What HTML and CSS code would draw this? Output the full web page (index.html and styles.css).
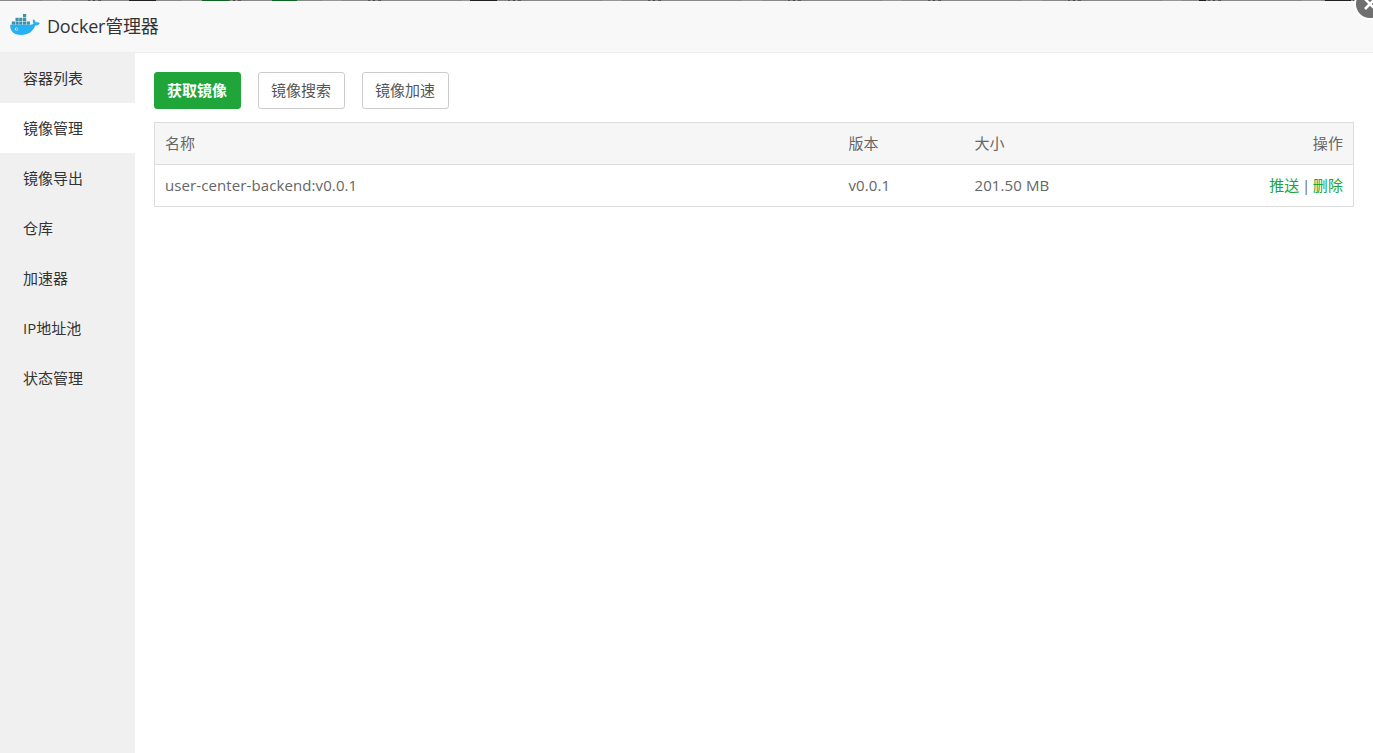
FILE: index.html
```html
<!DOCTYPE html>
<html lang="zh-CN">

<head>
    <meta charset="UTF-8">
    <meta name="viewport" content="width=device-width, initial-scale=1.0">
    <title>Docker管理器</title>
    <link rel="stylesheet" href="styles.css">
</head>

<body>
    <div class="backdrop"></div>
    <header class="title_bar">
        <svg class="logo" width="30" height="22" viewBox="0 0 30 22">
            <g fill="#3d92a8">
                <rect x="13" y="0" width="3.2" height="3.2"></rect>
                <rect x="5.5" y="3.8" width="3.2" height="3.2"></rect>
                <rect x="9.2" y="3.8" width="3.2" height="3.2"></rect>
                <rect x="13" y="3.8" width="3.2" height="3.2"></rect>
                <rect x="1.8" y="7.5" width="3.2" height="3.2"></rect>
                <rect x="5.5" y="7.5" width="3.2" height="3.2"></rect>
                <rect x="9.2" y="7.5" width="3.2" height="3.2"></rect>
                <rect x="13" y="7.5" width="3.2" height="3.2"></rect>
                <rect x="16.7" y="7.5" width="3.2" height="3.2"></rect>
            </g>
            <path fill="#27b1f5" d="M.2 10.7H20c1.5 0 2.700-.4 3.700-1.200-1.300-1.400-1.300-3.100-.2-4.300 1.300.8 2.100 1.900 2.200 3.200 1.500-.3 3-.1 4.200.6-.8 1.700-2.400 2.600-4.700 2.600C23.100 17.600 18.400 21 11.500 21 4.300 21-.2 17.800.2 10.700z"></path>
            <circle cx="6.500" cy="15" r="1.600" fill="#d6edf5"></circle>
            <circle cx="6.700" cy="15" r=".8" fill="#39748a"></circle>
        </svg>
        <h1>Docker管理器</h1>
    </header>

    <div class="container">
        <ul class="menu">
            <li>容器列表</li>
            <li class="active">镜像管理</li>
            <li>镜像导出</li>
            <li>仓库</li>
            <li>加速器</li>
            <li>IP地址池</li>
            <li>状态管理</li>
        </ul>

        <main class="content">
            <div class="btn_group">
                <button class="btn btn_success">获取镜像</button>
                <button class="btn">镜像搜索</button>
                <button class="btn">镜像加速</button>
            </div>

            <table class="table">
                <thead>
                    <tr>
                        <th class="col_name">名称</th>
                        <th class="col_version">版本</th>
                        <th class="col_size">大小</th>
                        <th class="col_action">操作</th>
                    </tr>
                </thead>
                <tbody>
                    <tr>
                        <td>user-center-backend:v0.0.1</td>
                        <td>v0.0.1</td>
                        <td>201.50 MB</td>
                        <td class="col_action"><a href="#">推送</a> | <a href="#">删除</a></td>
                    </tr>
                </tbody>
            </table>
        </main>
    </div>

    <svg class="close" width="32" height="32" viewBox="0 0 32 32">
        <circle cx="16" cy="16" r="16" fill="#fff"></circle>
        <circle cx="16" cy="16" r="14" fill="#707070"></circle>
        <path d="M11 11l10 10M21 11L11 21" stroke="#fff" stroke-width="2.600"></path>
    </svg>
</body>

</html>
```

FILE: styles.css
```css
* {
    margin: 0;
    padding: 0;
    box-sizing: border-box;
}

body {
    height: 100vh;
    display: flex;
    flex-direction: column;
    position: relative;
    overflow: hidden;
    background-color: #fff;
    color: #333;
    font-family: "Open Sans", "Noto Sans CJK SC", sans-serif;
    font-size: 15px;
}

/* dimmed page that shows above the dialog */
.backdrop {
    height: 1px;
    flex-shrink: 0;
    background:
        linear-gradient(90deg, transparent 202px, #0b6420 202px 229px, transparent 229px 272px, #0b6420 272px 297px, transparent 297px),
        linear-gradient(90deg, transparent 129px, #231e20 129px 156px, transparent 156px 470px, #231e20 470px 497px, transparent 497px 1199px, #231e20 1199px 1206px, transparent 1206px 1325px, #231e20 1325px 1351px, transparent 1351px),
        repeating-linear-gradient(90deg, #8b888a 0 42px, #999698 42px 62px, #8b888a 62px 88px, #555 88px 90px, #8b888a 90px 93px, #444 93px 95px, #8b888a 95px 98px, #555 98px 101px, #8b888a 101px 140px);
}

.title_bar {
    height: 52px;
    flex-shrink: 0;
    display: flex;
    align-items: center;
    padding: 0 10px 4px;
    background-color: #f8f8f8;
    border-bottom: 1px solid #eee;
}

.logo {
    margin-right: 7px;
}

.title_bar h1 {
    font-size: 18px;
    font-weight: 400;
    letter-spacing: -.2px;
}

.container {
    flex: 1;
    display: flex;
}

.menu {
    width: 135px;
    background-color: #f0f0f0;
    list-style: none;
}

.menu li {
    height: 50px;
    padding-left: 23px;
    line-height: 50px;
}

.menu .active {
    background-color: #fff;
}

.content {
    flex: 1;
    padding: 19px 19px 0;
}

.btn_group {
    display: flex;
    gap: 17px;
    margin-bottom: 13px;
}

.btn {
    width: 87px;
    height: 37px;
    padding: 0 1px 2px 0;
    background-color: #fff;
    border: 1px solid #ccc;
    border-radius: 3px;
    color: #555;
    font-family: inherit;
    font-size: 15px;
    cursor: pointer;
}

.btn_success {
    background-color: #20a53a;
    border-color: #20a53a;
    color: #fff;
    font-weight: 700;
}

.table {
    width: 100%;
    table-layout: fixed;
    border: 1px solid #ddd;
    border-collapse: collapse;
    color: #666;
}

.table th,
.table td {
    height: 42px;
    padding: 0 10px 2px;
    border-bottom: 1px solid #ddd;
    font-weight: 400;
    letter-spacing: .1px;
    line-height: 20px;
    text-align: left;
}

.table th {
    background-color: #f6f6f6;
}

.table .col_name {
    width: 684px;
}

.table .col_version {
    width: 126px;
}

.table .col_size {
    width: 190px;
}

.table .col_action {
    padding-left: 0;
    text-align: right;
    word-spacing: -1.5px;
}

.table a {
    color: #20a53a;
    text-decoration: none;
}

.close {
    position: absolute;
    top: -12px;
    left: 1354px;
}
```
